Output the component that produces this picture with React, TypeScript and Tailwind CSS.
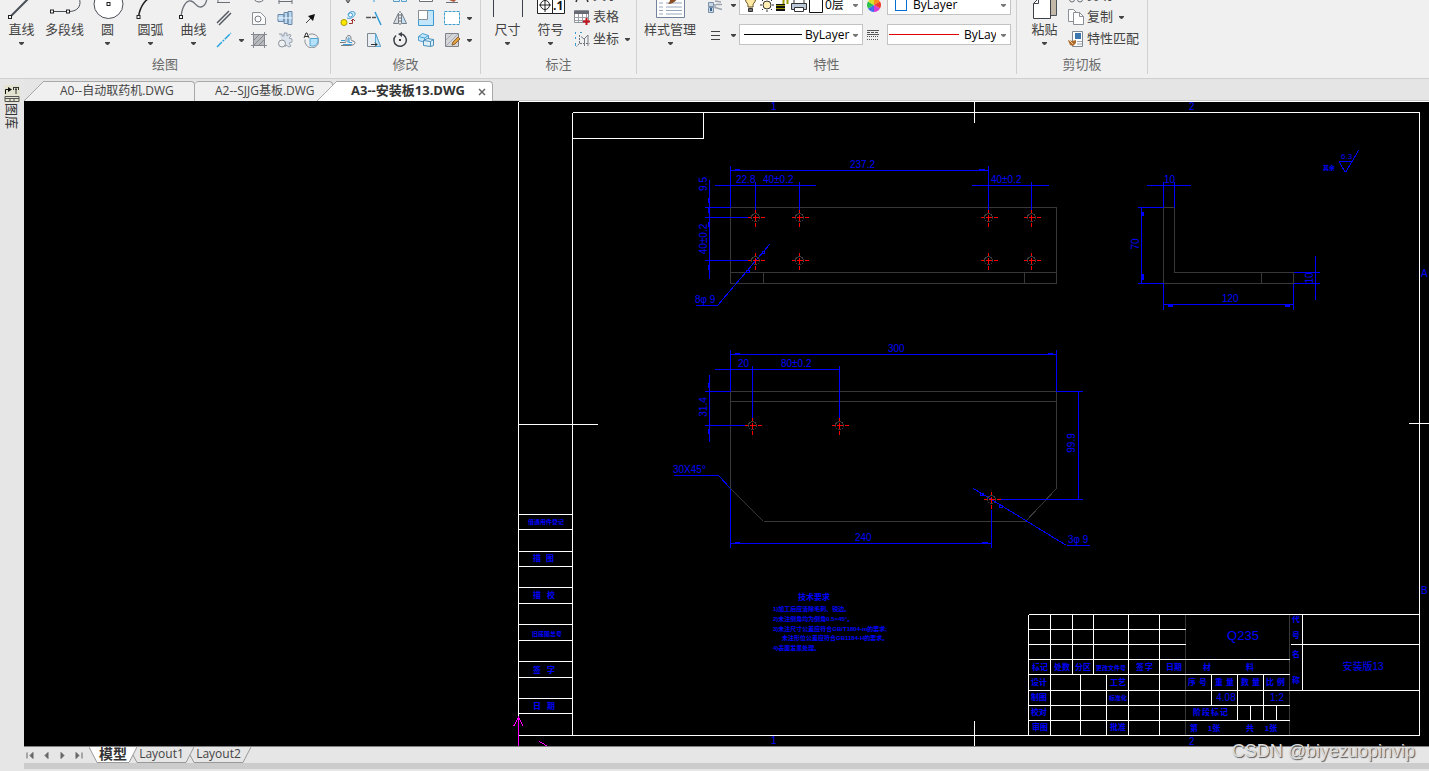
import type { ReactNode } from 'react';
import clsx from 'clsx';

type Segment = [number, number, number, number];
type Label = { x: number; y: number; text: string; size?: number; anchor?: 'start' | 'middle'; rotate?: boolean };

/* ---------- Drawing data (model space, screen units) ---------- */

const frameLines: Segment[] = [
  [518, 101, 1440, 101],
  [518, 101, 518, 716],
  [572, 112, 1419, 112],
  [572, 112, 572, 735],
  [1419, 112, 1419, 735],
  [518, 735, 1419, 735],
  [572, 138, 703, 138],
  [703, 112, 703, 138],
  [974, 101, 974, 122],
  [974, 720, 974, 746],
  [518, 424, 597, 424],
  [1408, 423, 1440, 423],
];

const sideTableRows = [514, 529, 551, 566, 587, 603, 624, 640, 661, 677, 698, 713];

const titleBlockLines: Segment[] = [
  [1028, 614, 1419, 614],
  [1028, 629, 1185, 629],
  [1028, 644, 1185, 644],
  [1290, 644, 1419, 644],
  [1028, 659, 1289, 659],
  [1028, 674, 1289, 674],
  [1028, 690, 1419, 690],
  [1028, 705, 1289, 705],
  [1028, 720, 1289, 720],
  [1028, 614, 1028, 735],
  [1050, 614, 1050, 735],
  [1072, 614, 1072, 674],
  [1093, 614, 1093, 674],
  [1128, 614, 1128, 735],
  [1159, 614, 1159, 735],
  [1302, 614, 1302, 690],
  [1080, 674, 1080, 735],
  [1106, 674, 1106, 735],
  [1211, 674, 1211, 705],
  [1237, 674, 1237, 720],
  [1263, 674, 1263, 720],
  [1250, 705, 1250, 720],
  [1276, 705, 1276, 720],
];

const partLines: Segment[] = [
  // front view
  [730, 207, 1056, 207],
  [730, 283, 1056, 283],
  [730, 207, 730, 283],
  [1056, 207, 1056, 283],
  [730, 272, 1056, 272],
  [763, 272, 763, 283],
  [1024, 272, 1024, 283],
  // side view
  [1163, 207, 1174, 207],
  [1174, 207, 1174, 272],
  [1174, 272, 1293, 272],
  [1293, 272, 1293, 283],
  [1163, 283, 1293, 283],
  [1163, 207, 1163, 283],
  [1261, 272, 1261, 283],
  // top view
  [730, 391, 1056, 391],
  [730, 401, 1056, 401],
  [730, 391, 730, 488],
  [1056, 391, 1056, 488],
  [730, 488, 763, 521],
  [763, 521, 1025, 521],
  [1025, 521, 1056, 488],
  // title block separators
  [1185, 614, 1185, 735],
  [1289, 614, 1289, 735],
];

const dimensionLines: Segment[] = [
  [730, 170, 988, 170],
  [730, 165, 730, 207],
  [988, 165, 988, 209],
  [714, 185, 815, 185],
  [755, 181, 755, 209],
  [799, 181, 799, 209],
  [971, 185, 1048, 185],
  [1031, 181, 1031, 209],
  [709, 179, 709, 278],
  [704, 207, 730, 207],
  [704, 217, 748, 217],
  [704, 260, 748, 260],
  [695, 305, 717, 305],
  [717, 305, 769, 244],
  [1146, 185, 1190, 185],
  [1163, 181, 1163, 207],
  [1174, 181, 1174, 207],
  [1141, 207, 1141, 283],
  [1137, 207, 1163, 207],
  [1137, 283, 1163, 283],
  [1315, 255, 1315, 299],
  [1293, 272, 1319, 272],
  [1293, 283, 1319, 283],
  [1163, 304, 1293, 304],
  [1163, 283, 1163, 309],
  [1293, 283, 1293, 309],
  [1338, 161, 1352, 161],
  [1339, 162, 1345, 172],
  [1345, 172, 1358, 150],
  [730, 354, 1056, 354],
  [730, 349, 730, 391],
  [1056, 349, 1056, 391],
  [714, 369, 839, 369],
  [752, 365, 752, 417],
  [839, 365, 839, 417],
  [709, 374, 709, 441],
  [704, 391, 730, 391],
  [704, 425, 745, 425],
  [673, 475, 718, 475],
  [718, 475, 730, 488],
  [730, 488, 730, 547],
  [730, 543, 991, 543],
  [991, 509, 991, 547],
  [1078, 391, 1078, 499],
  [1056, 391, 1082, 391],
  [1000, 499, 1082, 499],
  [973, 488, 1066, 545],
  [1066, 545, 1089, 545],
];

// arrow heads: x, y, width, height
const arrowHeads: Segment[] = [
  [735, 169, 4, 1],
  [979, 169, 5, 1],
  [708, 198, 1, 4],
  [708, 208, 1, 4],
  [708, 222, 1, 4],
  [708, 265, 1, 4],
  [1142, 212, 1, 3],
  [1142, 274, 1, 5],
  [1168, 305, 4, 1],
  [1285, 305, 4, 1],
  [735, 353, 4, 1],
  [1048, 353, 4, 1],
  [708, 383, 1, 4],
  [708, 429, 1, 4],
  [735, 542, 4, 1],
  [982, 542, 5, 1],
  [762, 251, 2, 2],
  [746, 270, 3, 2],
  [980, 493, 3, 2],
  [999, 505, 3, 2],
];

const holes = [
  [755, 217],
  [799, 217],
  [988, 217],
  [1031, 217],
  [755, 260],
  [799, 260],
  [988, 260],
  [1031, 260],
  [752, 425],
  [839, 425],
  [991, 499],
];

const dimensionLabels: Label[] = [
  { x: 850, y: 168, text: '237.2' },
  { x: 736, y: 183, text: '22.8' },
  { x: 763, y: 183, text: '40±0.2' },
  { x: 991, y: 183, text: '40±0.2' },
  { x: 707, y: 184, text: '9.5', rotate: true },
  { x: 707, y: 239, text: '40±0.2', rotate: true },
  { x: 695, y: 303, text: '8φ 9' },
  { x: 1164, y: 183, text: '10' },
  { x: 1139, y: 244, text: '70', rotate: true },
  { x: 1313, y: 278, text: '10', rotate: true },
  { x: 1222, y: 302, text: '120' },
  { x: 1341, y: 159, text: '6.3', size: 8 },
  { x: 888, y: 352, text: '300' },
  { x: 738, y: 367, text: '20' },
  { x: 781, y: 367, text: '80±0.2' },
  { x: 707, y: 407, text: '31.4', rotate: true },
  { x: 673, y: 473, text: '30X45°' },
  { x: 855, y: 541, text: '240' },
  { x: 1075, y: 443, text: '99.9', rotate: true },
  { x: 1068, y: 543, text: '3φ 9' },
  { x: 771, y: 110, text: '1' },
  { x: 1189, y: 110, text: '2' },
  { x: 771, y: 744, text: '1' },
  { x: 1189, y: 745, text: '2' },
  { x: 1421, y: 277, text: 'A' },
  { x: 1421, y: 594, text: 'B' },
  { x: 1243, y: 640, text: 'Q235', size: 13, anchor: 'middle' },
  { x: 1226, y: 701, text: '4.08', anchor: 'middle' },
  { x: 1277, y: 701, text: '1:2', anchor: 'middle' },
];

const sheetLabels: Label[] = [
  { x: 1323, y: 170, text: '其余', size: 6 },
  { x: 546, y: 524, text: '借通用件登记', size: 6, anchor: 'middle' },
  { x: 537, y: 561, text: '描', size: 8, anchor: 'middle' },
  { x: 550, y: 561, text: '图', size: 8, anchor: 'middle' },
  { x: 537, y: 598, text: '描', size: 8, anchor: 'middle' },
  { x: 551, y: 598, text: '校', size: 8, anchor: 'middle' },
  { x: 547, y: 636, text: '旧底图总号', size: 6, anchor: 'middle' },
  { x: 537, y: 673, text: '签', size: 8, anchor: 'middle' },
  { x: 551, y: 673, text: '字', size: 8, anchor: 'middle' },
  { x: 537, y: 709, text: '日', size: 8, anchor: 'middle' },
  { x: 551, y: 709, text: '期', size: 8, anchor: 'middle' },
  { x: 1040, y: 670, text: '标记', size: 8, anchor: 'middle' },
  { x: 1062, y: 670, text: '处数', size: 8, anchor: 'middle' },
  { x: 1083, y: 670, text: '分区', size: 8, anchor: 'middle' },
  { x: 1111, y: 670, text: '更改文件号', size: 6, anchor: 'middle' },
  { x: 1140, y: 670, text: '签', size: 8, anchor: 'middle' },
  { x: 1149, y: 670, text: '字', size: 8, anchor: 'middle' },
  { x: 1174, y: 670, text: '日期', size: 8, anchor: 'middle' },
  { x: 1207, y: 670, text: '材', size: 8, anchor: 'middle' },
  { x: 1250, y: 670, text: '料', size: 8, anchor: 'middle' },
  { x: 1039, y: 685, text: '设计', size: 8, anchor: 'middle' },
  { x: 1118, y: 685, text: '工艺', size: 8, anchor: 'middle' },
  { x: 1192, y: 685, text: '序', size: 8, anchor: 'middle' },
  { x: 1203, y: 685, text: '号', size: 8, anchor: 'middle' },
  { x: 1219, y: 685, text: '重', size: 8, anchor: 'middle' },
  { x: 1230, y: 685, text: '量', size: 8, anchor: 'middle' },
  { x: 1245, y: 685, text: '数', size: 8, anchor: 'middle' },
  { x: 1256, y: 685, text: '量', size: 8, anchor: 'middle' },
  { x: 1270, y: 685, text: '比', size: 8, anchor: 'middle' },
  { x: 1281, y: 685, text: '例', size: 8, anchor: 'middle' },
  { x: 1039, y: 700, text: '制图', size: 8, anchor: 'middle' },
  { x: 1118, y: 700, text: '标准化', size: 6, anchor: 'middle' },
  { x: 1039, y: 715, text: '校对', size: 8, anchor: 'middle' },
  { x: 1197, y: 715, text: '阶', size: 8, anchor: 'middle' },
  { x: 1206, y: 715, text: '段', size: 8, anchor: 'middle' },
  { x: 1215, y: 715, text: '标', size: 8, anchor: 'middle' },
  { x: 1224, y: 715, text: '记', size: 8, anchor: 'middle' },
  { x: 1040, y: 730, text: '审图', size: 8, anchor: 'middle' },
  { x: 1118, y: 730, text: '批准', size: 8, anchor: 'middle' },
  { x: 1194, y: 731, text: '第', size: 8, anchor: 'middle' },
  { x: 1214, y: 731, text: '1张', size: 8, anchor: 'middle' },
  { x: 1250, y: 731, text: '共', size: 8, anchor: 'middle' },
  { x: 1271, y: 731, text: '1张', size: 8, anchor: 'middle' },
  { x: 1296, y: 622, text: '代', size: 8, anchor: 'middle' },
  { x: 1296, y: 638, text: '号', size: 8, anchor: 'middle' },
  { x: 1296, y: 657, text: '名', size: 8, anchor: 'middle' },
  { x: 1296, y: 683, text: '称', size: 8, anchor: 'middle' },
  { x: 814, y: 600, text: '技术要求', size: 8, anchor: 'middle' },
  { x: 773, y: 611, text: '1)加工后应清除毛刺、锐边。', size: 6 },
  { x: 773, y: 621, text: '2)未注倒角均为倒角0.5×45°。', size: 6 },
  { x: 773, y: 631, text: '3)未注尺寸公差应符合GB/T1804-m的要求;', size: 6 },
  { x: 782, y: 640, text: '未注形位公差应符合GB1184-H的要求。', size: 6 },
  { x: 773, y: 650, text: '4)表面发黑处理。', size: 6 },
];

const partName: Label[] = [{ x: 1363, y: 670, text: '安装版13', size: 10, anchor: 'middle' }];

/* ---------- Drawing ---------- */

function Lines({ data, stroke }: { data: Segment[]; stroke: string }) {
  return (
    <g stroke={stroke}>
      {data.map(([x1, y1, x2, y2], i) => (
        <line key={i} x1={x1} y1={y1} x2={x2} y2={y2} />
      ))}
    </g>
  );
}

function Labels({ data }: { data: Label[] }) {
  return (
    <>
      {data.map(({ x, y, text, size = 10, anchor = 'start', rotate }, i) => (
        <text
          key={i}
          x={x}
          y={y}
          fontSize={size}
          textAnchor={rotate ? 'middle' : anchor}
          transform={rotate ? `rotate(-90 ${x} ${y})` : undefined}
        >
          {text}
        </text>
      ))}
    </>
  );
}

function Drawing() {
  return (
    <svg className="block h-full w-full bg-black" role="img" aria-label="安装板13">
      <g transform="translate(-23.5 -100.5)" fill="none" shapeRendering="crispEdges">
        <Lines data={partLines} stroke="#383838" />
        <Lines data={frameLines} stroke="#ffffff" />
        <Lines data={sideTableRows.map((y): Segment => [518, y, 572, y])} stroke="#ffffff" />
        <Lines data={titleBlockLines} stroke="#ffffff" />
        <Lines data={dimensionLines} stroke="#0000ff" />
        <g stroke="#0000ff">
          {arrowHeads.map(([x, y, w, h], i) => (
            <rect key={i} x={x} y={y} width={w} height={h} />
          ))}
        </g>
        {holes.map(([x, y], i) => (
          <g key={i}>
            <path
              stroke="#ff0000"
              d={`M${x - 8} ${y}h3M${x - 3} ${y}h7M${x + 5} ${y}h4M${x} ${y - 8}v3M${x} ${y - 3}v7M${x} ${y + 5}v4`}
            />
            <circle cx={x} cy={y} r={4} stroke="#3c3c3c" />
          </g>
        ))}
        <path stroke="#ff00ff" d="M518 746V717l-5 9M518 717l5 9M539 741l10 6" />
      </g>
      <g
        transform="translate(-24 -101)"
        fill="#0000ff"
        className="font-['Liberation_Sans','Noto_Sans_CJK_SC',sans-serif]"
      >
        <Labels data={dimensionLabels} />
        <Labels data={partName} />
        <g fontWeight={700}>
          <Labels data={sheetLabels} />
        </g>
      </g>
    </svg>
  );
}

/* ---------- Ribbon pieces ---------- */

function Caret({ className }: { className?: string }) {
  return (
    <svg className={clsx('h-2 w-[5px] shrink-0', className)} viewBox="0 0 5 8" fill="currentColor">
      <path d="M0 3h5v1L3 6H2L0 4z" />
    </svg>
  );
}

function Icon({ size = 16, children }: { size?: number; children: ReactNode }) {
  return (
    <svg width={size} height={size} viewBox={`0 0 ${size} ${size}`} fill="none" stroke="#6b7078" className="shrink-0">
      {children}
    </svg>
  );
}

function BigButton({ label, icon, caret = true, wide }: { label: string; icon: ReactNode; caret?: boolean; wide?: boolean }) {
  return (
    <button className={clsx('flex h-[66px] flex-col items-center pt-0.5', wide ? 'w-14' : 'w-[43px]')}>
      <Icon size={32}>{icon}</Icon>
      <span className="text-[13px] leading-5 whitespace-nowrap">{label}</span>
      {caret && <Caret />}
    </button>
  );
}

function SmallButton({ label, children }: { label: string; children: ReactNode }) {
  return (
    <button aria-label={label} className="flex h-[22px] w-[26px] items-center justify-center pb-px">
      <Icon>{children}</Icon>
    </button>
  );
}

function TextButton({ label, icon, caret }: { label: string; icon: ReactNode; caret?: boolean }) {
  return (
    <button className="flex h-[22px] items-center gap-[3px] pb-0.5 text-[13px] whitespace-nowrap">
      <Icon>{icon}</Icon>
      {label}
      {caret && <Caret className="ml-[3px]" />}
    </button>
  );
}

function Group({ title, className, children }: { title: string; className: string; children: ReactNode }) {
  return (
    <section className={clsx('flex shrink-0', className)}>
      <div className="min-w-0 flex-1">
        <div className="flex h-[66px]">{children}</div>
        <h2 className="h-[27px] text-center text-[13px] leading-[27px] text-[#6a6a6a]">{title}</h2>
      </div>
      <div className="mb-1 w-px bg-[#d0d0d0]" />
    </section>
  );
}

function Combo({ label, value, lead, gap }: { label: string; value: string; lead: ReactNode; gap: string }) {
  return (
    <div className={clsx('flex h-[21px] w-[124px] items-center border border-[#c3c3c3] bg-white pr-1', gap)}>
      {lead}
      <select
        aria-label={label}
        defaultValue={value}
        className="h-[19px] w-0 min-w-0 flex-1 appearance-none overflow-hidden bg-transparent p-0 text-[12px] leading-[19px] text-black outline-none"
      >
        <option>{value}</option>
      </select>
      <Caret className="text-[#777]" />
    </div>
  );
}

const dot = (x: number, y: number) => <rect x={x} y={y} width="3" height="3" fill="#fff" stroke="#222" />;

function DrawGroup() {
  return (
    <Group title="绘图" className="w-[331px]">
      <div className="flex">
        <BigButton
          label="直线"
          icon={
            <>
              <path d="M5 29L29 5" stroke="#4a4f58" strokeWidth="2" />
              {dot(2.5, 28.5)}
            </>
          }
        />
        <BigButton
          label="多段线"
          caret={false}
          icon={
            <>
              <path d="M4 24.500h16c6 0 11-3 11-9s-5-9-11-9" stroke="#4a4f58" />
              {dot(1.5, 23)}
              {dot(17.5, 23)}
            </>
          }
        />
        <BigButton
          label="圆"
          icon={
            <>
              <circle cx="16.500" cy="17" r="14.500" fill="#fff" stroke="#4a4f58" />
              {dot(15, 15.5)}
            </>
          }
        />
        <BigButton
          label="圆弧"
          icon={
            <>
              <path d="M3.500 30C5 19 10 11 24 6" stroke="#222" strokeWidth="1.500" />
              {dot(2, 28.5)}
            </>
          }
        />
        <BigButton
          label="曲线"
          icon={
            <>
              <path d="M3 30C4 20 8 13 13 14s5 7 10 6 6-7 7-14" stroke="#6b7078" strokeWidth="1.300" />
              {dot(1.5, 28.5)}
            </>
          }
        />
      </div>
      <div className="-ml-1 flex flex-col">
        <SmallButton label="多边形">
          <path d="M1 14.500h13M2 14V8" />
        </SmallButton>
        <SmallButton label="双线">
          <path d="M1 13L13 1M3 15L15 3" stroke="#555a62" strokeWidth="1.500" />
        </SmallButton>
        <div className="flex">
          <SmallButton label="构造线">
            <path d="M1 15L15 1" stroke="#28a5e0" strokeWidth="1.500" strokeDasharray="7 1 2 1" />
          </SmallButton>
          <button aria-label="构造线选项" className="flex w-2 items-center justify-center">
            <Caret />
          </button>
        </div>
      </div>
      <div className="ml-px grid h-[66px] grid-cols-3">
        <SmallButton label="椭圆">
          <circle cx="8" cy="8" r="6" />
        </SmallButton>
        <SmallButton label="标距">
          <path d="M2 13.500h13M2 11v5M15 11v5" />
        </SmallButton>
        <SmallButton label="点">
          <path d="M4 4l4 4" />
        </SmallButton>
        <SmallButton label="轮廓">
          <path d="M1.500 2.500h8l5 5v7h-13z" fill="#fbfbfb" stroke="#8b9097" />
          <circle cx="7" cy="9" r="3" stroke="#777d85" />
        </SmallButton>
        <SmallButton label="轴">
          <path d="M1 4.500h6v7H1zM7 2.500h4v11H7zM11 1.500h4v13h-4z" fill="#b9d8f2" stroke="#6c87a5" />
          <path d="M1 8h14" stroke="#f4f9ff" />
        </SmallButton>
        <SmallButton label="箭头">
          <path d="M3 13l5-5" stroke="#444" strokeWidth="1" />
          <path d="M12 4l-2 7-5-5z" fill="#111" stroke="none" />
        </SmallButton>
        <SmallButton label="填充">
          <path d="M2 2h12v12H2z" fill="#b8babd" stroke="none" />
          <path d="M2.500 0v16M13.500 0v16M0 2.500h16M0 13.500h16M3 8l5-5M3 13L13 3M8 13l5-5" stroke="#85898f" />
        </SmallButton>
        <SmallButton label="齿轮">
          <path
            d="M2 2h3v2h2V1h3v3l3-2 1 2-2 2 3 1v3l-3 1 2 3-2 1-3-2-1 2"
            fill="#dbe3ec"
            stroke="#9aa3ae"
          />
          <circle cx="5" cy="11.500" r="3.500" fill="#eef1f4" stroke="#8b9097" />
        </SmallButton>
        <SmallButton label="局部放大">
          <path d="M6 2.500a7 7 0 1 1-4 5" stroke="#8b9097" />
          <path d="M7 6.500h8v2a5.500 5.500 0 0 1-8 5z" fill="#b5e1fa" stroke="#51a7d8" />
          <path d="M1 6l2-5h1l2 5M2 4.500h3" stroke="#333" />
        </SmallButton>
      </div>
    </Group>
  );
}

function ModifyGroup() {
  return (
    <Group title="修改" className="w-[150px]">
      <div className="ml-1 grid h-[66px] grid-cols-5">
        <SmallButton label="移动">
          <path d="M8 2v12M6 12l2 3 2-3" stroke="#444" />
        </SmallButton>
        <SmallButton label="修剪">
          <path d="M8 3v11" stroke="#2f9ad6" />
        </SmallButton>
        <SmallButton label="阵列">
          <path d="M1.500 2.500h6v11h-6zM9.500 5.500h5v8h-5z" fill="#dff1fc" stroke="#5a9cc8" />
        </SmallButton>
        <SmallButton label="矩形">
          <path d="M1.500 2.500h13v11h-13z" fill="#fff" />
        </SmallButton>
        <SmallButton label="删除">
          <path d="M2 14.500h12" />
          <path d="M5 12l5-5 3 4-3 3z" fill="#b0573a" stroke="none" />
        </SmallButton>
        <SmallButton label="复制对象">
          <path d="M8 5c0-3 6-5 7-2s-5 7-8 5" fill="#c7e7fa" stroke="#4aa0d5" />
          <circle cx="10.500" cy="5" r="2" fill="#fff" stroke="#4aa0d5" />
          <circle cx="4" cy="12.500" r="3" fill="#ffe800" stroke="#a89b00" />
          <path d="M9 13.500h3.500V10M11 11l2-2 2 2" stroke="#9a3434" />
        </SmallButton>
        <SmallButton label="延伸">
          <path d="M0 7.500h5M6 7.500h4" stroke="#555" strokeWidth="1.500" />
          <path d="M9 2l6 13" stroke="#2f9ad6" strokeWidth="1.500" />
        </SmallButton>
        <SmallButton label="镜像">
          <path d="M6.500 3v10.500h-5z" fill="#d8dbe0" stroke="#777d85" />
          <path d="M9.500 3v10.500h5z" fill="#c3e4f8" stroke="#777d85" />
          <path d="M8 1v14" strokeDasharray="2 1" />
        </SmallButton>
        <SmallButton label="缩放">
          <path d="M.5.5h15v15H.5z" fill="#c3e6fa" stroke="#3d9bd1" />
          <path d="M.5 .5h9v9h-9z" fill="#fff" stroke="#8b9097" />
        </SmallButton>
        <SmallButton label="边界">
          <path d="M.5 1.500h15v13H.5z" fill="#fff" stroke="#3d9bd1" strokeDasharray="3 1" />
        </SmallButton>
        <SmallButton label="偏移">
          <path d="M0 10.500h5c1 0 1-1 1-3s1-4 3-4 2 2 2 4 4 1 4 3-3 3-5 3H1" stroke="#777d85" />
          <path d="M1 8.500h4M3 12.500h9M8 10.500V7c0-1 1-2 1-1v4.500h3" stroke="#3d9bd1" />
        </SmallButton>
        <SmallButton label="拉伸">
          <path d="M1.500 1.500h8l5 13h-13z" fill="#e9eef2" stroke="#7f8790" />
          <path d="M9.500 1.500l5 13h-5z" fill="#c3e6fa" stroke="#5aa9d6" />
          <path d="M5 12.500h6M9 10.500l2 2-2 2" stroke="#333" />
        </SmallButton>
        <SmallButton label="旋转">
          <path d="M4 3.500A6.200 6.200 0 1 0 9 2" stroke="#3d4148" strokeWidth="1.500" />
          <path d="M10 0L6 2l4 3z" fill="#3d4148" stroke="none" />
          <rect x="7" y="7" width="2" height="2" fill="#333" stroke="none" />
        </SmallButton>
        <SmallButton label="分解">
          <path d="M.5 4.500l4-3 6 2v5l-3 2-7-2z" fill="#c3e6fa" stroke="#4aa0d5" />
          <path d="M.5 4.500l6 1.500 4-2.500M6.500 6v4" stroke="#4aa0d5" />
          <path d="M5.500 8.500l4-2 6 1v6l-3 1-7-1zM5.500 8.500l7 1v5M12.500 9.500l3-2" fill="#dff1fc" stroke="#4a8fb9" />
        </SmallButton>
        <SmallButton label="编辑填充">
          <path d="M1.500 1.500h13v13h-13z" fill="#d3d5d8" stroke="#7f8389" />
          <path d="M2 8l6-6M2 14L14 2M8 14l6-6" stroke="#a9acb1" />
          <path d="M8 13l1-3 5-5 2 2-5 5z" fill="#e0a040" stroke="#94652a" />
        </SmallButton>
      </div>
      <div className="flex flex-col pt-[22px]">
        <button aria-label="更多边界" className="flex h-[22px] w-2 items-center justify-center">
          <Caret />
        </button>
        <button aria-label="更多编辑" className="flex h-[22px] w-2 items-center justify-center">
          <Caret />
        </button>
      </div>
    </Group>
  );
}

function AnnotateGroup() {
  return (
    <Group title="标注" className="w-[156px]">
      <div className="ml-[5px] flex">
        <BigButton label="尺寸" icon={<path d="M1.500 2v28M30.500 2v28M2 6h28" stroke="#3d424a" />} />
        <BigButton
          label="符号"
          icon={
            <>
              <path d="M2.500 6.500h27v20h-27zM17.500 6v20" fill="#fff" stroke="#222" />
              <circle cx="10" cy="18" r="4.500" stroke="#222" />
              <path d="M4 18h12M10 11v14" stroke="#222" />
              <text x="18" y="23" fontSize="12" fontWeight="700" fill="#111" stroke="none">
                .1
              </text>
            </>
          }
        />
      </div>
      <div className="ml-0.5">
        <TextButton label="文字" icon={<path d="M2 15L7 2h2l5 13M4 10h8" stroke="#333" strokeWidth="1.500" />} />
        <TextButton
          label="表格"
          icon={
            <>
              <path d="M.5 1.500h14v12H.5z" fill="#fff" stroke="#8b9097" />
              <path d="M0 2h15v3H0z" fill="#666b73" stroke="none" />
              <path d="M.5 8.500h14M.5 11.500h14M4.500 5v8M8.500 5v8M12.500 5v8" stroke="#9da2a9" />
              <path d="M12.500 9v7M9 12.500h7" stroke="#c4161c" strokeWidth="2" />
            </>
          }
        />
        <TextButton
          label="坐标"
          caret
          icon={
            <>
              <path d="M5.500 4v8.500h10M5.500 12.500l-3 3" strokeDasharray="2 1" />
              <path d="M7 5.500l3 2.500 4-4v11M10.500 8v7" stroke="#777d85" />
              <path d="M1.500 1v2M1.500 6v2M1.500 12v3M6 1.500h2" stroke="#3d9bd1" />
            </>
          }
        />
      </div>
    </Group>
  );
}

function LayerLead() {
  return (
    <svg width="84" height="19" viewBox="0 0 84 19" fill="none" className="shrink-0">
      <path d="M6 8a5 5 0 1 1 7 0c-1 1-1 2-1 4H7c0-2 0-3-1-4z" fill="#ffe9a3" stroke="#5c4a1a" />
      <path d="M7.500 13.500h4v3h-4z" fill="#777" stroke="#333" />
      <circle cx="26" cy="10" r="4" fill="#ffefb5" stroke="#333" />
      <path d="M26 3v2M26 15v2M19 10h2M31 10h2M21 5l1 1M30 14l1 1M21 15l1-1M30 6l1-1" stroke="#333" />
      <path d="M35 9h9v7h-9z" fill="#111" />
      <path d="M35 10.500h9M35 13.500h9" stroke="#9d9a00" />
      <path d="M42.500 9V4h4v5" stroke="#9d9a00" strokeWidth="2" />
      <path d="M53 8V2h10v6" fill="#fff" stroke="#333" />
      <path d="M50.500 8.500h15v6h-15z" fill="#bcc8d8" stroke="#333" />
      <path d="M53.500 12.500h9v4h-9z" fill="#fff" stroke="#333" />
      <path d="M68.500 2.500h13v15h-13z" fill="#fff" stroke="#111" />
    </svg>
  );
}

function PropertiesGroup() {
  return (
    <Group title="特性" className="w-[380px]">
      <div className="ml-[5px] flex">
        <BigButton
          wide
          label="样式管理"
          icon={
            <>
              <path d="M2.500 1.500h28v29h-28z" fill="#fff" stroke="#71839a" />
              <path d="M5 16h4M5 20h4M5 23.500h4M5 27h4M12 16h16M12 20h16M12 23.500h16M12 27h16" stroke="#96a8bd" />
              <path d="M14 17c5 0 9-3 11-9l-8 1c-1 4-1 6-3 8z" fill="#8a4f24" stroke="none" />
            </>
          }
        />
      </div>
      <div className="flex flex-col justify-end gap-[9px] pb-1.5 pl-[9px]">
        <div className="flex h-[21px] items-center">
          <Icon>
            <path d="M1.500 5.500h5v4h-5zM1.500 10.500h5v5h-5z" fill="#c9d7e5" stroke="#7890a8" />
            <path d="M3 11h2v3H3z" fill="#35658f" stroke="none" />
            <path d="M8 4l6 1M9 7.500h6M8 10.500l7 2M8 7v4" stroke="#9aa3ae" strokeWidth="1.500" />
          </Icon>
          <Caret className="mr-[3px] ml-2" />
          <Combo label="图层" value="0层" lead={<LayerLead />} gap="pl-px" />
          <span className="ml-1 flex w-5 justify-start">
            <svg width="14" height="14" viewBox="-7 -7 14 14">
              <path d="M0 0V-7A7 7 0 0 1 6-3.500z" fill="#ff8c1a" />
              <path d="M0 0L6-3.500A7 7 0 0 1 6 3.500z" fill="#f23a2f" />
              <path d="M0 0L6 3.500A7 7 0 0 1 0 7z" fill="#d63ad6" />
              <path d="M0 0V7A7 7 0 0 1-6 3.500z" fill="#3f6ff0" />
              <path d="M0 0L-6 3.500A7 7 0 0 1-6-3.500z" fill="#29c24c" />
              <path d="M0 0L-6-3.500A7 7 0 0 1 0-7z" fill="#d8e02a" />
            </svg>
          </span>
          <Combo
            label="颜色"
            value="ByLayer"
            gap="gap-[6px] pl-[7px]"
            lead={<span className="size-3 shrink-0 border border-[#0a6ed1] bg-white" />}
          />
        </div>
        <div className="flex h-[21px] items-center">
          <Icon>
            <path d="M4 4.500h9M4 8.500h9M4 12.500h9" stroke="#444" strokeWidth="1" />
          </Icon>
          <Caret className="mr-[3px] ml-2" />
          <Combo
            label="线宽"
            value="ByLayer"
            gap="gap-[3px] pl-1"
            lead={<span className="h-px w-[58px] shrink-0 bg-black" />}
          />
          <span className="ml-1 flex w-5 justify-start">
            <svg width="12" height="12" viewBox="0 0 12 12" stroke="#555">
              <path d="M0 1.500h12M0 5.500h12" />
              <path d="M0 3.500h12" strokeDasharray="3 1" />
              <path d="M0 7.500h12M0 10.500h12" strokeDasharray="1 1" />
            </svg>
          </span>
          <Combo
            label="线型"
            value="ByLayer"
            gap="gap-[5px] pl-px"
            lead={<span className="h-px w-[70px] shrink-0 bg-[#e00000]" />}
          />
        </div>
      </div>
    </Group>
  );
}

function ClipboardGroup() {
  return (
    <Group title="剪切板" className="w-[131px]">
      <div className="ml-1.5 flex">
        <BigButton
          label="粘贴"
          icon={
            <>
              <path d="M13.500 2.500h14v26h-14z" fill="#c3b8a8" stroke="#4a4f58" />
              <path d="M4.500 16.500l5-5h12v20h-17z" fill="#fff" stroke="#3d424a" />
              <path d="M4.500 16.500h5v-5" stroke="#3d424a" />
            </>
          }
        />
      </div>
      <div className="ml-0.5">
        <TextButton
          label="剪切"
          icon={
            <>
              <circle cx="4" cy="12.500" r="2.500" />
              <circle cx="12" cy="12.500" r="2.500" />
              <path d="M5 10l6-9M11 10L5 1" />
            </>
          }
        />
        <TextButton
          label="复制"
          caret
          icon={
            <>
              <path d="M.5.5h5l3 3v9h-8z" fill="#fff" stroke="#8b9097" />
              <path d="M5.500 3.500h6l4 4v8h-10z" fill="#fff" stroke="#8b9097" />
              <path d="M11.500 3.500v4h4" stroke="#8b9097" />
            </>
          }
        />
        <TextButton
          label="特性匹配"
          icon={
            <>
              <path d="M4.500.5h10v15h-10z" fill="#fff" stroke="#7f8790" />
              <path d="M7 2h6v6H7z" fill="#3a76b0" stroke="none" />
              <path d="M9 10.500h5M9 13h5" stroke="#9aa3ae" />
              <path d="M0 9l4 1 4-1v3l-3 3-3-1z" fill="#b06a2c" stroke="none" />
              <path d="M1 9l4 4" stroke="#e8c9a0" />
            </>
          }
        />
      </div>
    </Group>
  );
}

/* ---------- Tabs ---------- */

function FileTab({ title, active, slanted, className }: { title: string; active?: boolean; slanted?: boolean; className: string }) {
  const fill = active ? '#ffffff' : '#f0f0f0';
  return (
    <div className={clsx('flex h-5 shrink-0', active && 'relative -ml-4', className)}>
      {slanted && (
        <svg width="20" height="20" viewBox="0 0 20 20" className="shrink-0">
          <path d="M0 20L20 0V20z" fill={fill} />
          <path d="M0 20L20 0" stroke="#a8a8a8" />
        </svg>
      )}
      <div
        className={clsx(
          'flex min-w-0 flex-1 items-center rounded-tr-sm border-t border-r border-[#a8a8a8] leading-[17px] whitespace-nowrap',
          active ? 'bg-white pl-3.5 text-[13px] font-bold text-[#333]' : 'bg-[#f0f0f0] text-[12px]',
          !active && (slanted ? 'pl-4' : 'rounded-tl-sm pl-5')
        )}
      >
        <a href="#" className="flex-1 pb-0.5">{title}</a>
        {active && (
          <button aria-label="关闭" className="mr-1.5">
            <svg width="8" height="8" viewBox="0 0 8 8" stroke="#666" strokeWidth="1.500">
              <path d="M1 1l6 6M7 1L1 7" />
            </svg>
          </button>
        )}
      </div>
    </div>
  );
}

function LayoutTab({ title, active, className }: { title: string; active?: boolean; className: string }) {
  return (
    <a href="#" className={clsx('flex h-4 shrink-0', active ? 'relative z-10' : '-ml-2')}>
      <svg width="8" height="16" viewBox="0 0 8 16" className="shrink-0">
        {active && <path d="M0 0h8v16z" fill="#fff" />}
        <path d={active ? 'M0 0l8 15.500' : 'M4 8l4 7.500'} stroke="#999" fill="none" />
      </svg>
      <span
        className={clsx(
          'border-b border-[#999] text-center leading-[14px] whitespace-nowrap',
          active ? 'bg-white text-[14px] font-bold text-[#333]' : 'text-[12px]',
          className
        )}
      >
        {title}
      </span>
      <svg width="8" height="16" viewBox="0 0 8 16" className="shrink-0">
        {active && <path d="M0 0h8L0 16z" fill="#fff" />}
        <path d="M8 0L0 15.500" stroke="#999" fill="none" />
      </svg>
    </a>
  );
}

const pagers = [
  { label: '第一个', d: 'M1 1.500v6M7 1.500v6L4 4.500z' },
  { label: '上一个', d: 'M6 1.500v6L3 4.500z' },
  { label: '下一个', d: 'M3 1.500v6l3-3z' },
  { label: '最后一个', d: 'M8 1.500v6M2 1.500v6l3-3z' },
];

export default function App() {
  return (
    <div className="relative flex h-screen flex-col overflow-hidden bg-[#e6e6e6] font-['Open_Sans','Noto_Sans_CJK_SC',sans-serif] text-[#444]">
      <header className="flex h-[79px] shrink-0 items-end overflow-hidden border-b border-[#cfcfcf] bg-[#f0f0f0]">
        <DrawGroup />
        <ModifyGroup />
        <AnnotateGroup />
        <PropertiesGroup />
        <ClipboardGroup />
      </header>

      <div className="flex min-h-0 flex-1">
        {/* Docked palette */}
        <aside className="w-6 shrink-0 pt-1.5">
          <button className="flex w-[23px] flex-col items-center">
            <svg width="16" height="18" viewBox="0 0 16 18" fill="none" stroke="#333" className="bg-[#e3e3d0]">
              <path d="M1.500 9V4.500H5" stroke="#111" />
              <path d="M4 2l4 2.500L4 7z" fill="#111" stroke="none" />
              <path d="M9 2.500h6M9.500 2v3M14.500 2v3M12 3v6M11 4.500h2" />
              <path d="M1 11.500h14v5H1zM1 13.500h14M5 15h2M9 15h2" stroke="#555" />
            </svg>
            <span className="text-[13px] leading-4 text-[#333] [text-orientation:sideways] [writing-mode:vertical-rl]">图库</span>
          </button>
        </aside>

        <div className="flex min-w-0 flex-1 flex-col">
          <nav className="flex h-[22px] shrink-0 border-b border-[#c8c8c8] bg-[#e5e5e5] pt-0.5">
            <FileTab title="A0--自动取药机.DWG" slanted className="w-[171px]" />
            <FileTab title="A2--SJJG基板.DWG" className="w-[138px]" />
            <FileTab title="A3--安装板13.DWG" slanted active className="w-[176px]" />
          </nav>

          <main className="min-h-0 flex-1">
            <Drawing />
          </main>

          <footer className="h-[25px] shrink-0 border-t border-[#808080]">
            <div className="flex h-4">
              <div className="flex w-[65px] gap-[7px] pl-0.5">
                {pagers.map(({ label, d }) => (
                  <button key={label} aria-label={label} className="flex items-center">
                    <svg width="9" height="9" viewBox="0 0 9 9" fill="#666" stroke="#666">
                      <path d={d} />
                    </svg>
                  </button>
                ))}
              </div>
              <LayoutTab title="模型" active className="w-8" />
              <LayoutTab title="Layout1" className="w-[49px]" />
              <LayoutTab title="Layout2" className="w-[49px]" />
            </div>
            <div className="h-1.5 bg-[#cccccc]" />
          </footer>
        </div>
      </div>

      <p className="absolute right-3.5 bottom-1.5 font-['Liberation_Sans',sans-serif] text-[18px] leading-7 text-[#dcdcdc] [text-shadow:1px_1px_1px_#555]">
        CSDN @biyezuopinvip
      </p>
    </div>
  );
}
